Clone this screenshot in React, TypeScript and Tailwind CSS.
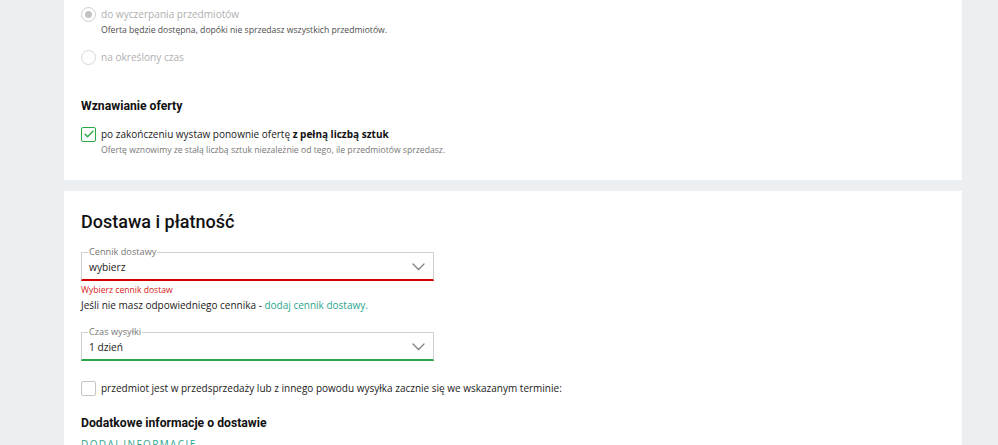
import React from "react";

const body = "font-['Open_Sans',sans-serif]";
const head = "font-['Roboto',sans-serif]";

function Chevron() {
  return (
    <svg width="13" height="8" viewBox="0 0 13 8" fill="none" className="shrink-0">
      <path d="M1 1l5.5 5.5L12 1" stroke="#808080" strokeWidth="1.3" strokeLinecap="round" strokeLinejoin="round" />
    </svg>
  );
}

function Select({ label, value, accent }: { label: string; value: string; accent: string }) {
  return (
    <fieldset className={`w-[353px] border border-[#cfcfcf] border-b-2 pl-[6px] pr-[8px] pb-[3px] pt-0 ${accent}`}>
      <legend className="px-[1px] text-[9.2px] leading-[12px] text-[#777]">{label}</legend>
      <div className="flex items-center justify-between h-[18px] pl-[1px]">
        <span className="text-[10.2px] leading-[18px] text-[#1a1a1a]">{value}</span>
        <Chevron />
      </div>
    </fieldset>
  );
}

export default function App() {
  return (
    <div className={`min-h-[445px] bg-[#eceff1] ${body} text-[#1a1a1a]`}>
      <div className="ml-[64px] w-[898px] flex flex-col gap-[11px]">
        <section className="bg-white pl-[17px] pt-[5px] pb-[23px]">
          <div className="flex items-start gap-[5px]">
            <span className="mt-[1.5px] w-[15px] h-[15px] rounded-full border border-[#cdcdcd] flex items-center justify-center">
              <span className="w-[7px] h-[7px] rounded-full bg-[#c2c2c2]" />
            </span>
            <div>
              <p className="text-[10.1px] leading-[18px] text-[#b0b0b0]">do wyczerpania przedmiotów</p>
              <p className="text-[8.65px] leading-[14px] text-[#4d4d4d]">
                Oferta będzie dostępna, dopóki nie sprzedasz wszystkich przedmiotów.
              </p>
            </div>
          </div>
          <div className="flex items-center gap-[5px] mt-[11px]">
            <span className="w-[15px] h-[15px] rounded-full border border-[#d6d6d6]" />
            <p className="text-[10.1px] leading-[18px] text-[#b0b0b0]">na określony czas</p>
          </div>

          <h3 className={`${head} mt-[31px] text-[12.2px] leading-[18px] font-bold text-[#111]`}>
            Wznawianie oferty
          </h3>
          <div className="flex items-start gap-[5px] mt-[10px]">
            <span className="mt-[1.5px] w-[15px] h-[15px] rounded-[2px] border-[1.5px] border-[#2aa847] flex items-center justify-center">
              <svg width="10" height="8" viewBox="0 0 10 8" fill="none">
                <path d="M1 4.2l2.6 2.6L9 1.2" stroke="#2aa847" strokeWidth="1.4" strokeLinecap="round" strokeLinejoin="round" />
              </svg>
            </span>
            <div>
              <p className="text-[10px] leading-[18px] text-[#1a1a1a]">
                po zakończeniu wystaw ponownie ofertę <b className="font-bold text-[#111]">z pełną liczbą sztuk</b>
              </p>
              <p className="text-[8.65px] leading-[14px] text-[#777]">
                Ofertę wznowimy ze stałą liczbą sztuk niezależnie od tego, ile przedmiotów sprzedasz.
              </p>
            </div>
          </div>
        </section>

        <section className="bg-white pl-[17px] pt-[19px] pb-[20px]">
          <h2 className={`${head} text-[18px] leading-[24px] font-medium text-[#111]`}>Dostawa i płatność</h2>

          <div className="mt-[12px]">
            <Select label="Cennik dostawy" value="wybierz" accent="border-b-[#d40000]" />
          </div>
          <p className="mt-[3px] text-[8.6px] leading-[12px] text-[#d31919]">Wybierz cennik dostaw</p>
          <p className="mt-[1px] text-[10px] leading-[16px] text-[#1a1a1a]">
            Jeśli nie masz odpowiedniego cennika - <a className="text-[#2aa58d]">dodaj cennik dostawy.</a>
          </p>

          <div className="mt-[13px]">
            <Select label="Czas wysyłki" value="1 dzień" accent="border-b-[#2aa847]" />
          </div>

          <div className="flex items-center gap-[5px] mt-[18px]">
            <span className="w-[15px] h-[15px] rounded-[2px] border border-[#c4c4c4]" />
            <p className="text-[10px] leading-[18px] text-[#1a1a1a]">
              przedmiot jest w przedsprzedaży lub z innego powodu wysyłka zacznie się we wskazanym terminie:
            </p>
          </div>

          <h3 className={`${head} mt-[17px] text-[12.2px] leading-[18px] font-bold text-[#111]`}>
            Dodatkowe informacje o dostawie
          </h3>
          <p className="mt-[5px] text-[10px] leading-[14px] tracking-[0.14em] text-[#2aa58d]">DODAJ INFORMACJE</p>
        </section>
      </div>
    </div>
  );
}
